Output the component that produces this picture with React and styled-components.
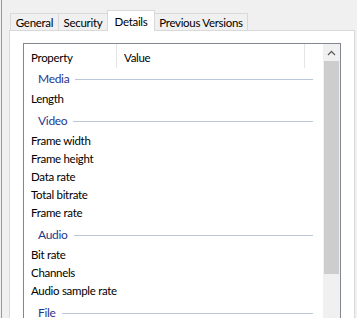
import React from "react";
import styled, { createGlobalStyle } from "styled-components";

const GlobalStyle = createGlobalStyle`
  html, body { margin: 0; padding: 0; background: #f0f0f0; }
  body {
    font-family: Lato, "Liberation Sans", sans-serif;
    font-size: 11.5px;
    letter-spacing: -0.3px;
    color: #000;
  }
`;

const Screen = styled.div`
  width: 357px;
  height: 318px;
  overflow: hidden;
  background: #f0f0f0;
  padding-left: 1px;
  box-sizing: border-box;
  display: flex;
`;

const Dialog = styled.div`
  flex: 1;
  border-left: 1px solid #9a9a9a;
  display: flex;
  flex-direction: column;
`;

const TabStrip = styled.div`
  display: flex;
  align-items: flex-end;
  height: 20px;
  padding-top: 10px;
  padding-left: 8px;
  position: relative;
  z-index: 1;
`;

const Tab = styled.div`
  box-sizing: border-box;
  width: ${(p) => p.$w}px;
  height: ${(p) => (p.$active ? 21 : 17)}px;
  margin-left: ${(p) => (p.$first ? 0 : -1)}px;
  margin-bottom: ${(p) => (p.$active ? -1 : 0)}px;
  border: 1px solid #d9d9d9;
  border-bottom: none;
  background: ${(p) => (p.$active ? "#ffffff" : "#f0f0f0")};
  position: relative;
  z-index: ${(p) => (p.$active ? 2 : 1)};
  display: flex;
  align-items: center;
  justify-content: center;
  padding-top: ${(p) => (p.$active ? 0 : 1)}px;
  white-space: nowrap;
  color: #000;
`;

const Panel = styled.div`
  margin-left: 7px;
  width: 346px;
  box-sizing: border-box;
  border: 1px solid #d9d9d9;
  background: #ffffff;
  padding: 12px 13px;
  flex: 1;
`;

const ListView = styled.div`
  width: 318px;
  height: 320px;
  box-sizing: border-box;
  border: 1px solid #828790;
  display: flex;
  background: #fff;
`;

const ListBody = styled.div`
  flex: 1;
  display: flex;
  flex-direction: column;
`;

const Header = styled.div`
  display: flex;
  height: 24px;
  flex-shrink: 0;
`;

const HeaderCell = styled.div`
  box-sizing: border-box;
  width: ${(p) => p.$w}px;
  border-right: 1px solid #e5e5e5;
  padding-left: 7px;
  padding-top: 3px;
  display: flex;
  align-items: center;
`;

const GroupRow = styled.div`
  display: flex;
  align-items: center;
  height: ${(p) => (p.$first ? 21 : 24)}px;
  padding-top: ${(p) => (p.$first ? 0 : 2)}px;
  box-sizing: border-box;
  padding-left: 14px;
  padding-right: 10px;
  flex-shrink: 0;
`;

const GroupLabel = styled.span`
  color: #1e3791;
  font-size: 12px;
`;

const GroupLine = styled.div`
  flex: 1;
  height: 1px;
  margin-left: 6px;
  margin-top: 2px;
  background: #b9c7d8;
`;

const ItemRow = styled.div`
  height: 18px;
  display: flex;
  align-items: center;
  padding-left: 7px;
  flex-shrink: 0;
`;

const ScrollBar = styled.div`
  width: 17px;
  background: #f0f0f0;
  display: flex;
  flex-direction: column;
`;

const ScrollButton = styled.div`
  height: 17px;
  display: flex;
  align-items: center;
  justify-content: center;
`;

const Thumb = styled.div`
  height: 213px;
  margin: 0 1px;
  background: #cdcdcd;
`;

const groups = [
  { name: "Media", items: ["Length"] },
  {
    name: "Video",
    items: ["Frame width", "Frame height", "Data rate", "Total bitrate", "Frame rate"],
  },
  { name: "Audio", items: ["Bit rate", "Channels", "Audio sample rate"] },
  { name: "File", items: [] },
];

const tabs = [
  { label: "General", w: 49 },
  { label: "Security", w: 50 },
  { label: "Details", w: 48, active: true },
  { label: "Previous Versions", w: 94 },
];

export default function App() {
  return (
    <>
      <GlobalStyle />
      <Screen>
        <Dialog>
          <TabStrip>
            {tabs.map((t, i) => (
              <Tab key={t.label} $w={t.w} $active={t.active} $first={i === 0}>
                {t.label}
              </Tab>
            ))}
          </TabStrip>
          <Panel>
            <ListView>
              <ListBody>
                <Header>
                  <HeaderCell $w={93}>Property</HeaderCell>
                  <HeaderCell $w={188}>Value</HeaderCell>
                </Header>
                {groups.map((g, gi) => (
                  <React.Fragment key={g.name}>
                    <GroupRow $first={gi === 0}>
                      <GroupLabel>{g.name}</GroupLabel>
                      <GroupLine />
                    </GroupRow>
                    {g.items.map((it) => (
                      <ItemRow key={it}>{it}</ItemRow>
                    ))}
                  </React.Fragment>
                ))}
              </ListBody>
              <ScrollBar>
                <ScrollButton>
                  <svg width="9" height="6" viewBox="0 0 9 6">
                    <path d="M1 5 L4.5 1.5 L8 5" fill="none" stroke="#606060" strokeWidth="1.3" />
                  </svg>
                </ScrollButton>
                <Thumb />
              </ScrollBar>
            </ListView>
          </Panel>
        </Dialog>
      </Screen>
    </>
  );
}
